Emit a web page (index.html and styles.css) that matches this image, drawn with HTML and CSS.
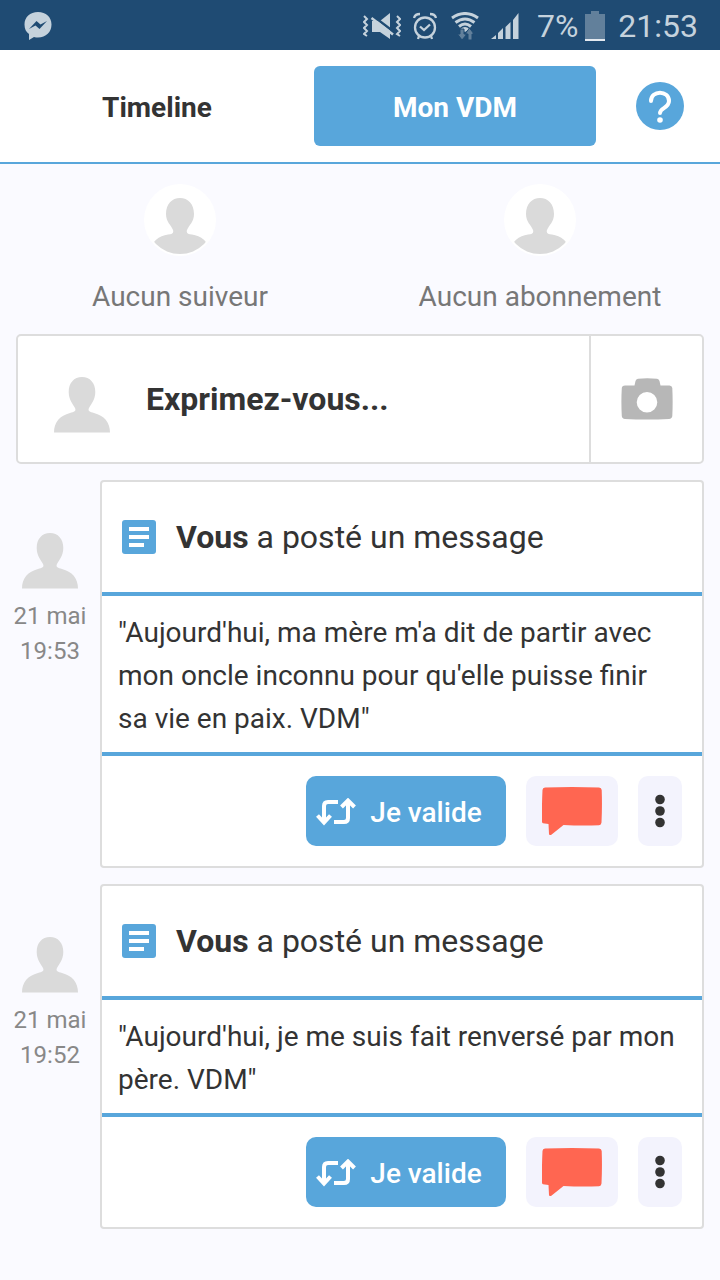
FILE: index.html
```html
<!DOCTYPE html>
<html lang="fr">
<head>
<meta charset="utf-8">
<meta name="viewport" content="width=device-width, initial-scale=1">
<title>Mon VDM</title>
<link rel="stylesheet" href="styles.css">
</head>
<body>
<svg class="sprite" width="0" height="0" aria-hidden="true">
  <symbol id="person" viewBox="0 0 56 56">
    <path d="M28 0C36 0 41.3 6 41.3 15C41.3 23 37 27 35 31C33.500 34 36 35 40 36C50 38.500 56 45 56 55.500H0C0 45 6 38.500 16 36C20 35 22.500 34 21 31C19 27 14.700 23 14.700 15C14.700 6 20 0 28 0Z"/>
  </symbol>
  <symbol id="person-round" viewBox="0 0 72 72">
    <clipPath id="disc"><circle cx="36" cy="36" r="34"/></clipPath>
    <circle cx="36" cy="36" r="36" fill="#fff"/>
    <path clip-path="url(#disc)" d="M36 14C44 14 50 20 50 30C50 38 45 41 43 46C42 49 44 50 48 50.500C57 52 66 57 66 72H6C6 57 15 52 24 50.500C28 50 30 49 29 46C27 41 22 38 22 30C22 20 28 14 36 14Z"/>
  </symbol>
  <symbol id="note" viewBox="0 0 34 34">
    <rect width="34" height="34" rx="3" fill="#58a6db"/>
    <path d="M7 7H27V11H7ZM7 15H27V19H7ZM7 23H22V27H7Z" fill="#fff"/>
  </symbol>
  <symbol id="repost" viewBox="0 0 40 28">
    <path d="M22 4H12Q8 4 8 8V24M1.500 17.500L8 24.500L14.500 17.500M18 24H28Q32 24 32 20V4M25.500 9L32 2.500L38.500 9" fill="none" stroke="#fff" stroke-width="4"/>
  </symbol>
  <symbol id="bubble" viewBox="0 0 60 48">
    <path d="M3 .5Q30-.5 57 .5Q59.500 .5 59.700 3Q60.300 19 59.500 35.500Q59.300 38 57 38.300Q39 39 21.500 38L9 48Q7.500 48.500 7 47L6.500 37L1 36.200Q0 36 0 34.500Q-.3 19 .5 3Q.6 .7 3 .5Z" fill="#ff6651"/>
  </symbol>
  <symbol id="dots" viewBox="0 0 10 34">
    <g fill="#333"><circle cx="5" cy="5.500" r="4.800"/><circle cx="5" cy="17" r="4.800"/><circle cx="5" cy="28.500" r="4.800"/></g>
  </symbol>
</svg>

<div class="status">
  <svg class="status-app" width="28" height="28" viewBox="0 0 28 28">
    <path d="M14 0C22 0 27.500 5 27.500 12.500C27.500 20 22 25.500 14 25.500Q12 25.500 10 25L5 28V22C2 20 .5 17 .5 12.500C.5 5 6 0 14 0Z" fill="#c5d2dc"/>
    <path d="M5 17L12.500 9L16.500 12.500L23 9L15.500 17L11.500 13.500Z" fill="#1f4b73"/>
  </svg>
  <div class="status-icons">
    <svg width="38" height="28" viewBox="0 0 38 28">
      <path d="M9 9H17L27 1V27L17 20H9Z" fill="#c5d2dc"/>
      <path d="M10 4L31 20" stroke="#1f4b73" stroke-width="2.500"/>
      <path d="M8.500 6L30 22.500" stroke="#c5d2dc" stroke-width="2.500"/>
      <path d="M1 4L4 7L1 10L4 13L1 16L4 19L1 22L4 24M34 4L37 7L34 10L37 13L34 16L37 19L34 22L37 24" fill="none" stroke="#c5d2dc" stroke-width="2"/>
    </svg>
    <svg class="status-alarm" width="24" height="28" viewBox="0 0 24 28" fill="none" stroke="#c5d2dc" stroke-width="2.300">
      <circle cx="12" cy="15.500" r="10"/><path d="M7 14.500L11 18L17 12.500M1 6Q2 2 7 2M23 6Q22 2 17 2M6 24L5 27M18 24L19 27"/>
    </svg>
    <svg width="28" height="28" viewBox="0 0 28 28" fill="none" stroke="#c5d2dc" stroke-width="3">
      <path d="M1 6Q14-3 27 6M4.500 10.500Q14 3.500 23.500 10.500M8 14.500Q14 9.500 20 14.500"/>
      <path d="M9.500 17Q14 13 18.500 17L14 20Z" fill="#c5d2dc" stroke="none"/>
      <path d="M9 17H13V22H16L11 28L6.500 22H9ZM17 28V22H14L18.500 16L23 22H21V28Z" fill="#62809b" stroke="#1f4b73" stroke-width="1"/>
    </svg>
    <svg width="28" height="28" viewBox="0 0 28 28" fill="#c5d2dc">
      <path d="M0 27L5 23V27ZM7 21L12 16V27H7ZM14.500 15L19.500 10V27H14.500ZM22 8L27.500 1V27H22Z"/>
    </svg>
    <span class="status-charge">7%</span>
    <svg width="20" height="30" viewBox="0 0 20 30"><path d="M0 3H6V0H14V3H20V28H0Z" fill="#62809b"/><path d="M0 28H20V30H0Z" fill="#e4eaf0"/></svg>
    <time class="status-time">21:53</time>
  </div>
</div>

<header class="topbar">
  <button class="tab" type="button">Timeline</button>
  <button class="tab tab-active" type="button">Mon VDM</button>
  <button class="help" type="button" aria-label="Aide">
    <svg width="48" height="48" viewBox="0 0 48 48"><circle cx="24" cy="24" r="24" fill="#58a6db"/><path d="M15 19C15 8 33 8 33 19C33 26 24 26 24 31" fill="none" stroke="#fff" stroke-width="4" stroke-linecap="round"/><circle cx="24" cy="38" r="2.800" fill="#fff"/></svg>
  </button>
</header>

<main>
  <section class="social">
    <div class="social-item"><svg class="person" width="72" height="72"><use href="#person-round"/></svg><span>Aucun suiveur</span></div>
    <div class="social-item"><svg class="person" width="72" height="72"><use href="#person-round"/></svg><span>Aucun abonnement</span></div>
  </section>

  <section class="composer">
    <button class="composer-text" type="button"><svg class="person" width="56" height="56"><use href="#person"/></svg>Exprimez-vous...</button>
    <button class="composer-photo" type="button" aria-label="Photo">
      <svg width="52" height="42" viewBox="0 0 52 42"><path fill-rule="evenodd" d="M17 .8Q26-.4 36 .8Q38 1 38.500 3L39.500 7.500H48.500Q51 7.500 51.300 10Q52 24 51.300 38Q51 40.700 48 41Q26 42 4 41Q1 40.700 .8 38Q0 24 .8 10Q1 7.500 4 7.500H13.500L14.500 3Q15 1 17 .8ZM26 14A10.300 10.300 0 1 0 26 34.600A10.300 10.300 0 1 0 26 14Z" fill="#b7b7b7"/></svg>
    </button>
  </section>

  <article class="post">
    <div class="post-author"><svg class="person" width="56" height="56"><use href="#person"/></svg><time>21 mai<br>19:53</time></div>
    <div class="card">
      <h2 class="card-title"><svg width="34" height="34"><use href="#note"/></svg><span><b>Vous</b> a posté un message</span></h2>
      <p class="card-body">"Aujourd'hui, ma mère m'a dit de partir avec mon oncle inconnu pour qu'elle puisse finir sa vie en paix. VDM"</p>
      <div class="card-actions">
        <button class="validate" type="button"><svg width="40" height="28"><use href="#repost"/></svg>Je valide</button>
        <button class="comment" type="button" aria-label="Commenter"><svg width="60" height="48"><use href="#bubble"/></svg></button>
        <button class="more" type="button" aria-label="Plus"><svg width="10" height="34"><use href="#dots"/></svg></button>
      </div>
    </div>
  </article>

  <article class="post">
    <div class="post-author"><svg class="person" width="56" height="56"><use href="#person"/></svg><time>21 mai<br>19:52</time></div>
    <div class="card">
      <h2 class="card-title"><svg width="34" height="34"><use href="#note"/></svg><span><b>Vous</b> a posté un message</span></h2>
      <p class="card-body">"Aujourd'hui, je me suis fait renversé par mon père. VDM"</p>
      <div class="card-actions">
        <button class="validate" type="button"><svg width="40" height="28"><use href="#repost"/></svg>Je valide</button>
        <button class="comment" type="button" aria-label="Commenter"><svg width="60" height="48"><use href="#bubble"/></svg></button>
        <button class="more" type="button" aria-label="Plus"><svg width="10" height="34"><use href="#dots"/></svg></button>
      </div>
    </div>
  </article>
</main>
</body>
</html>
```
FILE: styles.css
```css
* { box-sizing: border-box; }

body {
  margin: 0;
  background: #fafaff;
  color: #333;
  font-family: Roboto, "Liberation Sans", sans-serif;
  font-size: 28px;
}

svg { display: block; flex: none; }
.sprite { position: absolute; }
.person { fill: #dadada; }

button {
  display: flex;
  align-items: center;
  justify-content: center;
  margin: 0;
  padding: 0;
  border: 0;
  background: none;
  color: inherit;
  font: inherit;
}

.status {
  display: flex;
  align-items: center;
  justify-content: space-between;
  height: 50px;
  padding: 2px 22px 0 24px;
  background: #1f4b73;
  color: #c5d2dc;
  font-size: 32px;
}
.status-icons { display: flex; align-items: center; gap: 12px; }
.status-alarm { margin-right: 2px; }
.status-charge { margin-left: 6px; margin-right: -5px; }
.status-time { margin-left: 1px; }

.topbar {
  display: grid;
  grid-template-columns: 1fr 1fr 96px;
  gap: 16px;
  padding: 16px 12px 16px 16px;
  border-bottom: 2px solid #58a6db;
  background: #fff;
}
.tab { height: 80px; padding-top: 2px; border-radius: 6px; font-weight: 700; }
.tab-active { background: #58a6db; color: #fff; }

.social {
  display: grid;
  grid-template-columns: 1fr 1fr;
  padding: 20px 0 17px;
  color: #777;
  line-height: 40px;
}
.social-item { display: flex; flex-direction: column; align-items: center; gap: 21px; }

.composer {
  display: flex;
  margin: 0 16px 16px;
  border: 2px solid #ddd;
  border-radius: 5px;
  background: #fff;
}
.composer-text {
  flex: 1;
  justify-content: flex-start;
  gap: 36px;
  height: 126px;
  padding: 8px 36px;
  font-size: 32px;
  font-weight: 700;
}
.composer-text .person { margin-top: 12px; }
.composer-photo { width: 113px; border-left: 2px solid #ddd; }

.post {
  display: grid;
  grid-template-columns: 100px 1fr;
  margin: 0 16px 16px 0;
}
.post-author {
  display: flex;
  flex-direction: column;
  align-items: center;
  gap: 10px;
  padding-top: 53px;
  color: #888;
  font-size: 24px;
  line-height: 35px;
  text-align: center;
}

.card { border: 2px solid #ddd; border-radius: 4px; background: #fff; }
.card-title {
  display: flex;
  align-items: center;
  gap: 20px;
  height: 110px;
  margin: 0;
  padding: 0 20px;
  font-size: 32px;
  font-weight: 400;
}
.card-body {
  margin: 0;
  padding: 15px 20px 12px 16px;
  border-top: 4px solid #58a6db;
  border-bottom: 4px solid #58a6db;
  line-height: 43px;
}
.card-actions { display: flex; justify-content: flex-end; gap: 20px; padding: 20px; }
.card-actions button { height: 70px; border-radius: 10px; background: #f3f3fd; }
.card-actions .validate {
  gap: 14px;
  width: 200px;
  padding: 2px 14px 0 0;
  background: #58a6db;
  color: #fff;
  font-weight: 500;
}
.comment { width: 92px; }
.more { width: 44px; }
```
